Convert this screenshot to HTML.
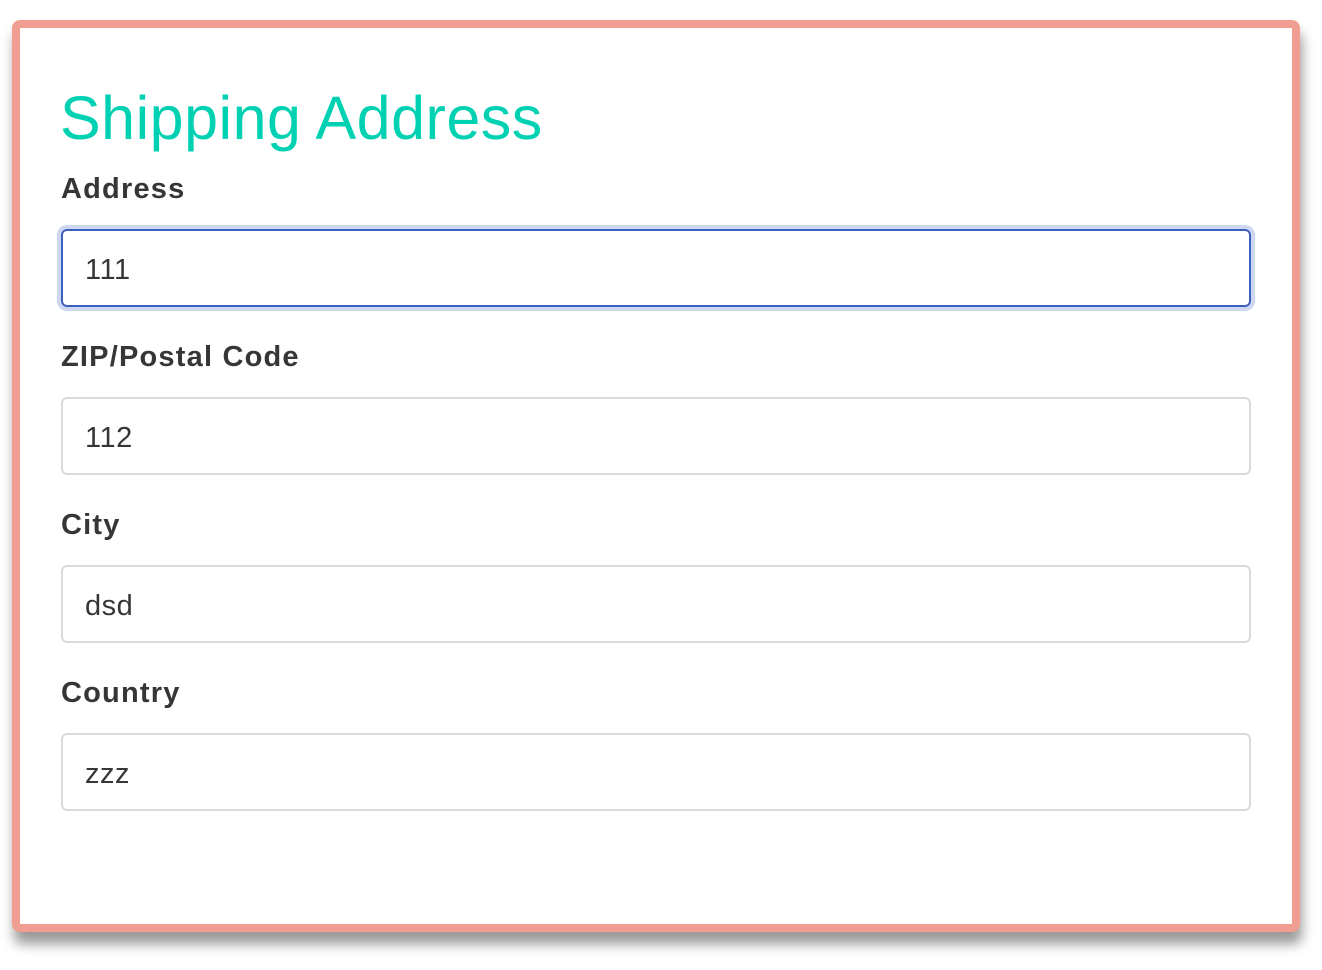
<!DOCTYPE html>
<html><head><style>
body{margin:0;width:1322px;height:970px;background:#fff;font-family:"Liberation Sans",sans-serif;position:relative;overflow:hidden}
.box{position:absolute;left:12px;top:20px;width:1272px;height:896px;border:8px solid #f09e92;border-radius:8px;box-shadow:2px 12px 12px rgba(0,0,0,.4);background:#fff}
h1{position:absolute;left:60px;top:82px;margin:0;font-weight:normal;font-size:61px;color:#00d1b2;line-height:72px;letter-spacing:0.5px}
.lbl{position:absolute;left:61px;font-weight:bold;font-size:29px;color:#363636;line-height:36px;letter-spacing:1.2px}
.in{position:absolute;left:61px;height:74px;border:2px solid #dbdbdb;border-radius:6px;box-sizing:content-box;font-size:29px;color:#363636;line-height:78px;padding-left:22px;width:1164px;letter-spacing:0.5px}
.f{border-color:#3e5fbf;box-shadow:0 0 0 4px rgba(62,95,191,.25)}
</style></head><body>
<div class="box"></div>
<h1>Shipping Address</h1>
<div class="lbl" style="top:171px">Address</div>
<div class="in f" style="top:229px">111</div>
<div class="lbl" style="top:339px">ZIP/Postal Code</div>
<div class="in" style="top:397px">112</div>
<div class="lbl" style="top:507px">City</div>
<div class="in" style="top:565px">dsd</div>
<div class="lbl" style="top:675px">Country</div>
<div class="in" style="top:733px">zzz</div>
</body></html>
